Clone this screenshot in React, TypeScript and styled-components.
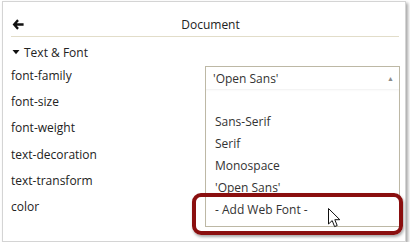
import React from 'react';
import styled, { createGlobalStyle } from 'styled-components';

const GlobalStyle = createGlobalStyle`
  html, body {
    margin: 0;
    padding: 0;
    background: #ffffff;
  }
  body {
    font-family: 'Open Sans', 'Liberation Sans', sans-serif;
    font-size: 12px;
    color: #333333;
  }
`;

const labels = ['font-family', 'font-size', 'font-weight', 'text-decoration', 'text-transform', 'color'];
const options = ['', 'Sans-Serif', 'Serif', 'Monospace', "'Open Sans'", '- Add Web Font -'];

const BackArrow = () => (
  <svg width="12" height="11" viewBox="0 0 12 11">
    <path d="M5.2 0.3 L0.6 5.5 L5.2 10.7 L6.9 9.1 L4.8 6.7 L11.6 6.7 L11.6 4.3 L4.8 4.3 L6.9 1.9 Z" fill="#111" />
  </svg>
);

const DownCaret = () => (
  <svg width="8" height="6" viewBox="0 0 8 6">
    <path d="M0.5 1 L7.5 1 L4 5.2 Z" fill="#111" />
  </svg>
);

const Pointer = () => (
  <svg width="14" height="21" viewBox="0 0 14 21">
    <path
      d="M0.5 0.5 L0.5 16 L4.2 12.6 L6.6 18.6 L9.2 17.5 L6.8 11.7 L11.8 11.7 Z"
      fill="#fff"
      stroke="#111"
      strokeWidth="1"
      strokeLinejoin="round"
    />
  </svg>
);

export default function App() {
  return (
    <>
      <GlobalStyle />
      <Panel>
        <Header>
          <BackArrow />
          <Title>Document</Title>
        </Header>
        <Section>
          <SectionTitle>
            <Caret>
              <DownCaret />
            </Caret>
            Text &amp; Font
          </SectionTitle>
          <Rows>
            {labels.map((label, index) => (
              <Row key={label}>
                <Label>{label}</Label>
                {index === 0 && (
                  <SelectAnchor>
                    <SelectBox>
                      <SelectValue>
                        'Open Sans'
                        <UpArrow>▲</UpArrow>
                      </SelectValue>
                      <OptionList>
                        {options.map((opt, i) => (
                          <Option key={i}>{opt}</Option>
                        ))}
                      </OptionList>
                    </SelectBox>
                  </SelectAnchor>
                )}
              </Row>
            ))}
          </Rows>
        </Section>
        <Highlight />
        <CursorSpot>
          <Pointer />
        </CursorSpot>
      </Panel>
    </>
  );
}

const Panel = styled.div`
  position: relative;
  box-sizing: border-box;
  margin: 1px 0 0 2px;
  width: 404px;
  height: 241px;
  border: 1px solid #d4d4d4;
  background: #fff;
  box-shadow: 2px 2px 3px rgba(0, 0, 0, 0.35);
`;

const Header = styled.div`
  display: flex;
  align-items: center;
  box-sizing: border-box;
  height: 35px;
  padding: 10px 0 0 1px;
  margin: 0 6px 0 8px;
  border-bottom: 1px solid #e2ddc9;
`;

const Title = styled.div`
  flex: 1;
  text-align: center;
  padding-right: 2px;
  font-size: 12px;
  color: #222;
`;

const Section = styled.div`
  padding: 6px 0 0 8px;
`;

const SectionTitle = styled.div`
  display: flex;
  align-items: center;
  height: 18px;
  font-size: 12px;
  color: #222;
`;

const Caret = styled.span`
  display: flex;
  align-items: center;
  width: 12px;
  padding-left: 1px;
`;

const Rows = styled.div`
  display: flex;
  flex-direction: column;
  padding-top: 1px;
`;

const Row = styled.div`
  display: flex;
  align-items: center;
  height: 26.3px;
`;

const Label = styled.div`
  width: 194px;
  color: #222;
`;

const SelectAnchor = styled.div`
  position: relative;
  flex: 1;
  align-self: stretch;
`;

const SelectBox = styled.div`
  position: absolute;
  top: 4px;
  left: 0;
  width: 195px;
  box-sizing: border-box;
  border: 1px solid #bdb8a5;
  background: #fff;
  z-index: 2;
`;

const SelectValue = styled.div`
  display: flex;
  align-items: center;
  justify-content: space-between;
  height: 22px;
  padding: 0 5px 0 7px;
  color: #333;
`;

const UpArrow = styled.span`
  font-size: 7px;
  color: #8a8a8a;
`;

const OptionList = styled.div`
  display: flex;
  flex-direction: column;
  padding-bottom: 5px;
  box-shadow: inset 0 2px 3px -2px rgba(0, 0, 0, 0.12);
`;

const Option = styled.div`
  height: 22px;
  line-height: 22px;
  padding-left: 9px;
  color: #333;
`;

const Highlight = styled.div`
  position: absolute;
  left: 189px;
  top: 191px;
  width: 211px;
  height: 42px;
  box-sizing: border-box;
  border: 4px solid #8a0f0f;
  border-radius: 9px;
  box-shadow: 1px 2px 3px rgba(0, 0, 0, 0.35);
  z-index: 3;
`;

const CursorSpot = styled.div`
  position: absolute;
  left: 325px;
  top: 206px;
  width: 14px;
  height: 21px;
  z-index: 4;
`;
